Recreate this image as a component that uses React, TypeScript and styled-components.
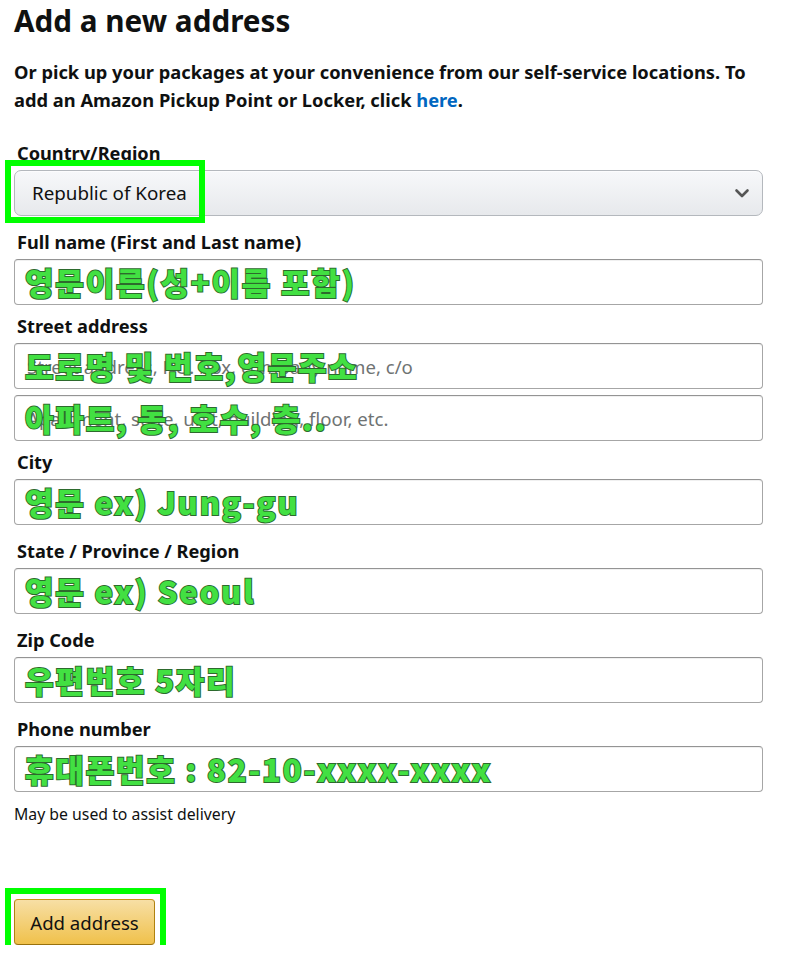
import React from "react";
import styled, { createGlobalStyle } from "styled-components";

const Global = createGlobalStyle`
  html, body { margin: 0; padding: 0; background: #fff; }
  body { font-family: "Noto Sans", "Open Sans", Arial, sans-serif; color: #0f1111; }
  * { box-sizing: border-box; }
`;

const Page = styled.div`
  width: 787px;
  padding: 0 22px 0 14px;
  display: flex;
  flex-direction: column;
`;

const Title = styled.h1`
  margin: 1px 0 0 0;
  font-size: 29.7px;
  line-height: 40px;
  font-weight: 700;
`;

const Intro = styled.p`
  margin: 17px 0 0 0;
  font-size: 18.3px;
  line-height: 28px;
  font-weight: 700;
  a { color: #0066c0; text-decoration: none; }
`;

const Field = styled.div<{ $top: number }>`
  margin-top: ${(p) => p.$top}px;
  display: flex;
  flex-direction: column;
  gap: 5px;
  padding-right: 2px;
`;

const Label = styled.div`
  font-size: 18.2px;
  line-height: 24px;
  font-weight: 700;
  padding-left: 3px;
`;

const Stack = styled.div`
  display: flex;
  flex-direction: column;
  gap: 6px;
`;

const Box = styled.div`
  position: relative;
  height: 46px;
  border: 1px solid #a6a6a6;
  border-top-color: #949494;
  border-radius: 4px;
  background: #fff;
  box-shadow: 0 1px 0 rgba(0, 0, 0, 0.06) inset;
  display: flex;
  align-items: center;
  padding-left: 12px;
  font-size: 18.6px;
  color: #6f7373;
  white-space: nowrap;
  overflow: hidden;
`;

const SelectBox = styled.div`
  position: relative;
  height: 46px;
  border: 1px solid #b4b8bd;
  border-radius: 7px;
  background: linear-gradient(to bottom, #f7f8fa, #e7e9ec);
  box-shadow: 0 1px 0 rgba(255, 255, 255, 0.6) inset;
  display: flex;
  align-items: center;
  justify-content: space-between;
  padding: 0 12px 0 17px;
  font-size: 18.8px;
  color: #0f1111;
`;

const Note = styled.div<{ $pad: number }>`
  position: absolute;
  left: ${(p) => p.$pad}px;
  top: 50%;
  transform: translateY(-52%);
  font-family: "Noto Sans CJK KR", "Noto Sans", sans-serif;
  font-weight: 900;
  font-size: 31px;
  line-height: 1;
  letter-spacing: 1.8px;
  color: #42e042;
  -webkit-text-stroke: 2px #2d6a2d;
  paint-order: stroke fill;
  white-space: nowrap;
`;

const Highlight = styled.div<{ $l: number; $t: number; $w: number; $h: number }>`
  position: absolute;
  left: ${(p) => p.$l}px;
  top: ${(p) => p.$t}px;
  width: ${(p) => p.$w}px;
  height: ${(p) => p.$h}px;
  border: 6px solid #00ff00;
  pointer-events: none;
`;

const Hint = styled.div`
  margin-top: 12px;
  font-size: 15.8px;
  line-height: 20px;
  color: #0f1111;
`;

const SelectWrap = styled.div`
  position: relative;
`;

const ButtonWrap = styled.div`
  position: relative;
  margin-top: 75px;
  align-self: flex-start;
`;

const Button = styled.button`
  width: 141px;
  height: 46px;
  border: 1px solid;
  border-color: #c89411 #b0820f #99710d;
  border-radius: 4px;
  background: linear-gradient(to bottom, #f7dfa5, #f0c14b);
  font-family: "Noto Sans", sans-serif;
  font-size: 18.6px;
  color: #111;
  padding: 0;
`;

function Chevron() {
  return (
    <svg width="16" height="12" viewBox="0 0 16 12">
      <path d="M2.5 3.5 L8 9 L13.5 3.5" fill="none" stroke="#555" strokeWidth="2.6" strokeLinecap="round" strokeLinejoin="round" />
    </svg>
  );
}

export default function App() {
  return (
    <>
      <Global />
      <Page>
        <Title>Add a new address</Title>
        <Intro>
          Or pick up your packages at your convenience from our self-service locations. To add an Amazon Pickup Point or
          Locker, click <a href="#">here</a>.
        </Intro>

        <Field $top={27}>
          <Label>Country/Region</Label>
          <SelectWrap>
            <SelectBox>
              <span>Republic of Korea</span>
              <Chevron />
            </SelectBox>
            <Highlight $l={-9} $t={-10} $w={200} $h={63} />
          </SelectWrap>
        </Field>

        <Field $top={14}>
          <Label>Full name (First and Last name)</Label>
          <Box>
            <Note $pad={10}>영문이른(성+이름 포함)</Note>
          </Box>
        </Field>

        <Field $top={9}>
          <Label>Street address</Label>
          <Stack>
            <Box>
              Street address, P.O. box, company name, c/o
              <Note $pad={10}>도로명 및 번호,영문주소</Note>
            </Box>
            <Box>
              Apartment, suite, unit, building, floor, etc.
              <Note $pad={10}>아파트, 동, 호수, 층..</Note>
            </Box>
          </Stack>
        </Field>

        <Field $top={9}>
          <Label>City</Label>
          <Box>
            <Note $pad={10}>영문 ex) Jung-gu</Note>
          </Box>
        </Field>

        <Field $top={14}>
          <Label>State / Province / Region</Label>
          <Box>
            <Note $pad={10}>영문 ex) Seoul</Note>
          </Box>
        </Field>

        <Field $top={14}>
          <Label>Zip Code</Label>
          <Box>
            <Note $pad={10}>우편번호 5자리</Note>
          </Box>
        </Field>

        <Field $top={14}>
          <Label>Phone number</Label>
          <Box>
            <Note $pad={10}>휴대폰번호 : 82-10-xxxx-xxxx</Note>
          </Box>
        </Field>

        <Hint>May be used to assist delivery</Hint>

        <ButtonWrap>
          <Button>Add address</Button>
          <Highlight $l={-9} $t={-11} $w={161} $h={67} />
        </ButtonWrap>
      </Page>
    </>
  );
}
